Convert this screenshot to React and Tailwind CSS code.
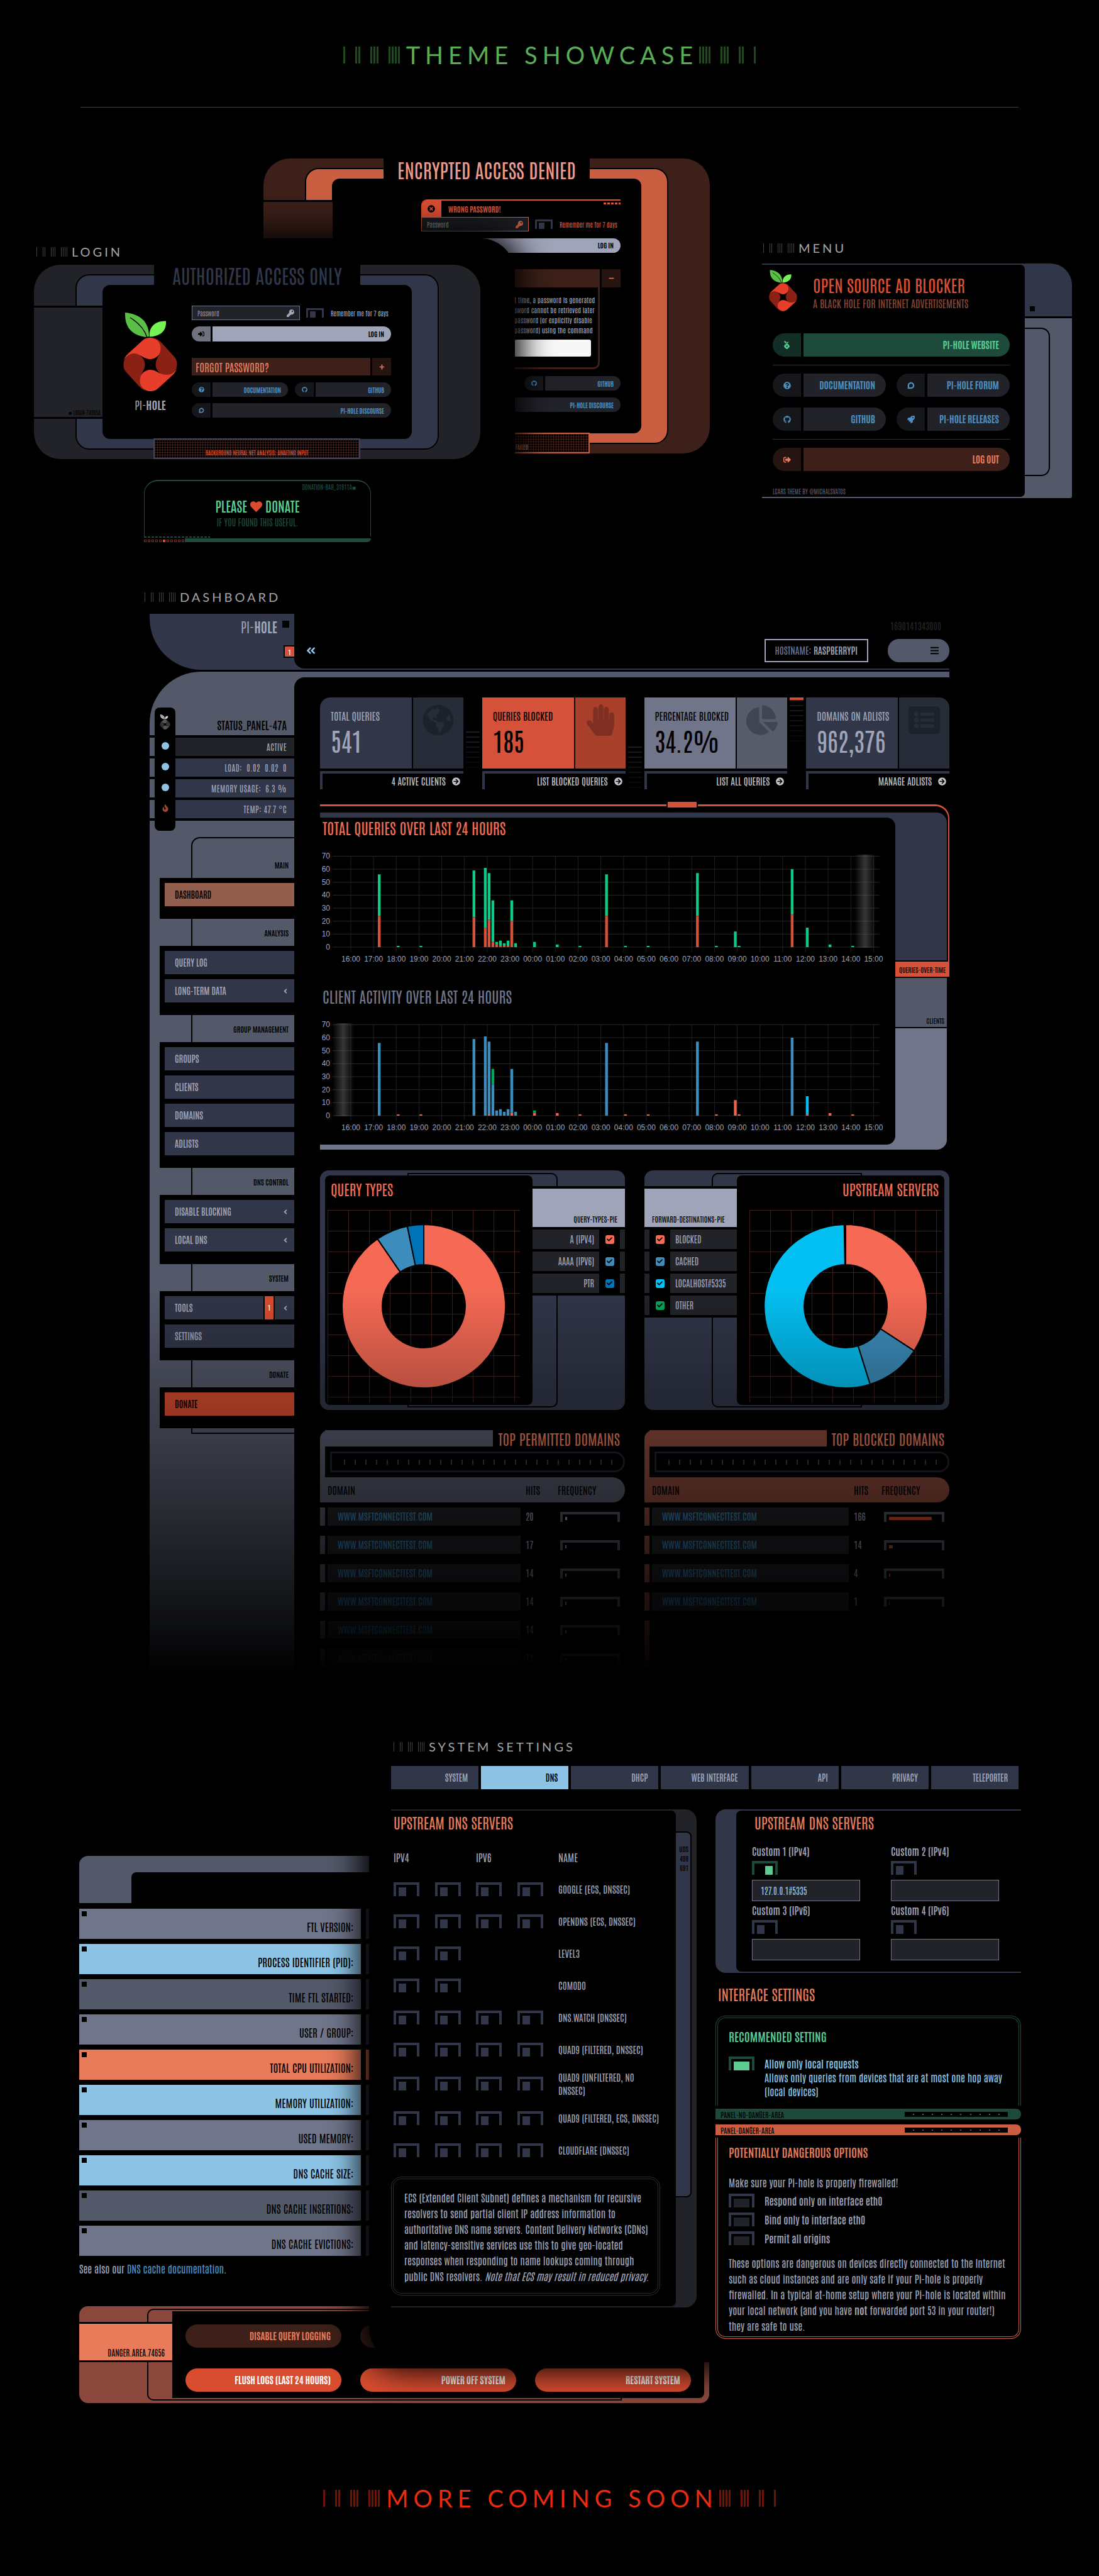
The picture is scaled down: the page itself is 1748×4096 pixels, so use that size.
import {
  FaKey, FaSignInAlt, FaPlus, FaMinus, FaQuestionCircle, FaGithub, FaDiscourse, FaHeart,
  FaTimesCircle, FaRocket, FaSignOutAlt, FaGlobeAmericas, FaHandPaper, FaChartPie, FaListAlt,
  FaArrowCircleRight, FaAngleDoubleLeft, FaBars, FaFire, FaCheck, FaAngleLeft,
} from "react-icons/fa";

/* ---------- shared pieces ---------- */

const PETAL =
  "M0.5 77C2 72 4 69 7 66L30 45C34 41 38 40 43 40C53 40 60.5 48 60.5 57C60.5 66 52 74 43 74C33 74 28 66 17 66C9 66 3 71 0.5 77Z";

function PiLogo({ className, bright = "#e63e2a", dark = "#8b2015", leaf = "#5bbf46", leaf2 = "#73f354" }) {
  return (
    <svg viewBox="0 0 86 125" className={className} aria-hidden="true">
      <path fill={leaf} d="M3 0C24 2 41 12 41 38L36 39C14 36 2 24 3 0Z" />
      <path fill="none" stroke="#000" strokeWidth="1.4" d="M11 8C24 16 34 26 38 40" />
      <path fill={leaf2} d="M68 13.5C52 13 40 22 42 38.5C60 38 69 28 68 13.5Z" />
      <path fill={bright} d={PETAL} />
      <path fill={dark} d={PETAL} transform="rotate(90 43 82.5)" />
      <path fill={bright} d={PETAL} transform="rotate(180 43 82.5)" />
      <path fill={dark} d={PETAL} transform="rotate(270 43 82.5)" />
    </svg>
  );
}

function Bars({ groups, bar, inner, outer }) {
  return (
    <span aria-hidden="true" className={"flex h-full " + outer}>
      {groups.map((n) => (
        <span key={n} className={"flex h-full " + inner}>
          {Array.from({ length: n }, (_, i) => (
            <i key={i} className={"block h-full " + bar} />
          ))}
        </span>
      ))}
    </span>
  );
}

function Banner({ children, tone, bar }) {
  return (
    <div className="flex h-[27px] items-center justify-center gap-[10px]">
      <Bars groups={[1, 2, 3, 4]} bar={"w-[3px] " + bar} inner="gap-[2px]" outer="gap-[16px]" />
      <h1 className={"mr-[-8px] text-[38px] leading-[27px] tracking-[8px] [font-family:Lato,sans-serif] " + tone}>{children}</h1>
      <Bars groups={[4, 3, 2, 1]} bar={"w-[3px] " + bar} inner="gap-[2px]" outer="gap-[16px]" />
    </div>
  );
}

function Label({ children, className = "" }) {
  return (
    <div className={"flex h-[20px] items-center gap-[7px] " + className}>
      <span className="h-[15px]">
        <Bars groups={[1, 2, 3, 4]} bar="w-px bg-[#444]" inner="gap-[2px]" outer="gap-[9px]" />
      </span>
      <h2 className="text-[20px] leading-[20px] tracking-[4px] text-[#a5a5a5] [font-family:Lato,sans-serif]">{children}</h2>
    </div>
  );
}

function Pill({ icon: Icon, children, seg, main, text, small, className = "" }) {
  return (
    <a href="#" className={"flex " + (small ? "h-[23px] gap-[3px] " : "h-[37px] gap-[4px] ") + text + " " + className}>
      <span className={"flex items-center justify-center " + seg + (small ? " w-[30px] rounded-l-[12px] text-[9px]" : " w-[45px] rounded-l-[19px] text-[12px]")}>
        <Icon />
      </span>
      <span className={"flex flex-1 items-center justify-end font-bold " + main + (small ? " rounded-r-[12px] pr-[11px] text-[10px]" : " rounded-r-[19px] pr-[17px] text-[15px]")}>
        {children}
      </span>
    </a>
  );
}

const KNOB = "appearance-none shrink-0 bg-no-repeat ";
const TOGGLES = {
  small: "h-[15px] w-[28px] border-x-[3px] border-t-[3px] border-[#313648] bg-[linear-gradient(#313648,#313648)] bg-[length:9px_10px] bg-[position:3px_100%]",
  off: "h-[22px] w-[41px] border-x-[4px] border-t-[4px] border-[#313648] bg-[linear-gradient(#313648,#313648)] bg-[length:12px_14px] bg-[position:4px_100%]",
  on: "h-[22px] w-[41px] border-x-[4px] border-t-[4px] border-[#1e4a3c] bg-[linear-gradient(#5ccc93,#5ccc93)] bg-[length:12px_14px] bg-[position:17px_100%]",
  wideOn: "h-[22px] w-[41px] border-x-[4px] border-t-[4px] border-[#1e4a3c] bg-[linear-gradient(#5ccc93,#5ccc93)] bg-[length:25px_14px] bg-[position:4px_100%]",
  wideOff: "h-[22px] w-[41px] border-x-[4px] border-t-[4px] border-[#313648] bg-[linear-gradient(#222329,#222329)] bg-[length:25px_14px] bg-[position:4px_100%]",
};
function Toggle({ kind = "off", type = "checkbox", className = "", ...rest }) {
  return <input type={type} className={KNOB + TOGGLES[kind] + " " + className} {...rest} />;
}

const BLUE_SEG = "bg-[#16171b]";
const BLUE_MAIN = "bg-[#222329]";
const BLUE_TEXT = "text-[#4e8fc0]";
const HATCH =
  "bg-[repeating-linear-gradient(90deg,#3c2019_0_1px,transparent_1px_4px),repeating-linear-gradient(0deg,#3c2019_0_1px,transparent_1px_4px)]";

/* ---------- login screens ---------- */

function DeniedScreen() {
  return (
    <div className="relative h-[469px] rounded-[42px] bg-[#3c2019] px-[66px] py-[15px]">
      <div className="h-full rounded-[22px] border-2 border-black bg-[#c95e41] px-[41px] py-[15px]">
        <div className="h-full rounded-[12px] bg-black pl-[142px] pr-[33px] pt-[33px]">
          <div className="relative flex h-[28px] rounded-tl-[9px] border-t-2 border-[#d84d30]">
            <span className="flex w-[32px] items-center justify-center rounded-tl-[8px] bg-[#d84d30] text-[12px] text-black"><FaTimesCircle /></span>
            <span className="flex items-center pl-[11px] text-[12px] font-bold text-[#d8573c]">WRONG PASSWORD!</span>
            <span className="absolute right-0 top-[3px] h-[3px] w-[27px] bg-[repeating-linear-gradient(90deg,#d8573c_0_4px,transparent_4px_6px)]" />
          </div>
          <div className="flex items-center">
            <label className="flex h-[23px] w-[171px] shrink-0 items-center border border-[#c95e41] bg-[#1b1c21] px-[8px]">
              <input placeholder="Password" aria-label="Password" className="w-full bg-transparent text-[10px] leading-none placeholder:text-[#85868c]" />
              <FaKey className="shrink-0 text-[12px] text-[#b0593c]" />
            </label>
            <label className="ml-[10px] flex items-center gap-[11px] whitespace-nowrap text-[10px] font-medium text-[#d8573c]">
              <Toggle kind="small" /> Remember me for 7 days
            </label>
          </div>
          <button className="mt-[11px] flex h-[23px] w-full items-center justify-end rounded-[12px] bg-[#9fa4b8] pr-[11px] text-[11px] font-bold text-black">LOG IN</button>
          <div className="mt-[26px] flex gap-[3px]">
            <div className="h-[159px] w-[284px] rounded-b-[10px] border-x-[3px] border-b-[3px] border-t-[29px] border-[#3c2019] pl-[145px] pt-[12px]">
              <p className="text-[11px] leading-[16px] whitespace-nowrap text-[#9fa4b8]">
                t time, a password is generated<br />sword cannot be retrieved later<br />password (or explicitly disable<br />password) using the command
              </p>
              <div className="mt-[7px] mr-[11px] h-[27px] rounded-[3px] bg-[#f7f7f8]" />
            </div>
            <button aria-label="Collapse" className="flex h-[29px] flex-1 items-center justify-center bg-[#25140f] text-[9px] text-[#e77b5a]"><FaMinus /></button>
          </div>
          <Pill small icon={FaGithub} seg={BLUE_SEG} main={BLUE_MAIN} text={BLUE_TEXT} className="mt-[11px] ml-auto w-[153px]">GITHUB</Pill>
          <Pill small icon={FaDiscourse} seg={BLUE_SEG} main={BLUE_MAIN} text={BLUE_TEXT} className="mt-[11px]">PI-HOLE DISCOURSE</Pill>
        </div>
      </div>
      <div className="absolute left-0 top-[66px] h-[330px] w-[110px] border-t-[3px] border-black bg-[#3c2019]" />
      <h3 className="absolute left-[191px] top-0 flex h-[34px] w-[328px] items-center justify-center bg-black text-[31px] leading-none font-medium whitespace-nowrap text-[#ea9a8c]">
        ENCRYPTED ACCESS DENIED
      </h3>
      <div className={"absolute bottom-0 left-[191px] flex h-[33px] w-[328px] items-end border-2 border-[#c95e41] bg-black pb-[4px] pl-[208px] text-[9px] leading-none text-[#b97b66] " + HATCH}>FAILED</div>
    </div>
  );
}

function LoginScreen() {
  return (
    <div className="relative rounded-[42px] bg-[#222329] px-[66px] py-[15px]">
      <div className="rounded-[22px] border-2 border-black bg-[#313648] px-[41px] py-[15px]">
        <div className="flex h-[245px] rounded-[12px] bg-black pl-[33px] pr-[33px]">
          <div className="w-[86px] pt-[44px]">
            <PiLogo className="h-[125px] w-[86px]" />
            <p className="mt-[9px] text-center text-[18px] leading-[24px] text-[#9fa4b8]"><span className="font-light">PI-</span><b>HOLE</b></p>
          </div>
          <form className="ml-[23px] flex-1 pt-[33px]" onSubmit={(e) => e.preventDefault()}>
            <div className="flex items-center">
              <label className="flex h-[23px] w-[172px] shrink-0 items-center border border-[#70758a] bg-[#222329] px-[8px]">
                <input placeholder="Password" aria-label="Password" className="w-full bg-transparent text-[10px] leading-none placeholder:text-[#8a8b90]" />
                <FaKey className="shrink-0 text-[12px] text-[#9fa4b8]" />
              </label>
              <label className="ml-[10px] flex items-center gap-[11px] whitespace-nowrap text-[10px] font-medium text-[#9fa4b8]">
                <Toggle kind="small" /> Remember me for 7 days
              </label>
            </div>
            <button className="mt-[10px] flex h-[24px] w-full gap-[3px] text-[11px] font-bold text-black">
              <span className="flex h-full w-[30px] items-center justify-center rounded-l-[12px] bg-[#70727f] text-[10px]"><FaSignInAlt /></span>
              <span className="flex h-full flex-1 items-center justify-end rounded-r-[12px] bg-[#9fa4b8] pr-[11px]">LOG IN</span>
            </button>
            <div className="mt-[26px] flex h-[28px] gap-[3px] text-[#e77b5a]">
              <h4 className="flex flex-1 items-center bg-[#3c2019] pl-[6px] text-[17px] leading-none font-medium">FORGOT PASSWORD?</h4>
              <button type="button" aria-label="Expand" className="flex w-[30px] items-center justify-center bg-[#25140f] text-[9px]"><FaPlus /></button>
            </div>
            <div className="mt-[11px] grid grid-cols-2 gap-x-[11px] gap-y-[10px]">
              <Pill small icon={FaQuestionCircle} seg={BLUE_SEG} main={BLUE_MAIN} text={BLUE_TEXT}>DOCUMENTATION</Pill>
              <Pill small icon={FaGithub} seg={BLUE_SEG} main={BLUE_MAIN} text={BLUE_TEXT}>GITHUB</Pill>
              <Pill small icon={FaDiscourse} seg={BLUE_SEG} main={BLUE_MAIN} text={BLUE_TEXT} className="col-span-2">PI-HOLE DISCOURSE</Pill>
            </div>
          </form>
        </div>
      </div>
      <div className="absolute left-0 top-[65px] flex h-[180px] w-[109px] items-end justify-end border-y-[3px] border-black bg-[#222329] pb-[3px] pr-[3px] text-[9px] leading-none text-black">
        ■ LOGIN-74205A
      </div>
      <h3 className="absolute left-[191px] top-0 flex h-[33px] w-[328px] items-center justify-center bg-black text-[31px] leading-none whitespace-nowrap text-[#313648]">
        AUTHORIZED ACCESS ONLY
      </h3>
      <div className={"absolute bottom-0 left-[190px] flex h-[33px] w-[329px] items-end justify-center border-2 border-[#3d4358] bg-black pb-[4px] text-[9px] leading-none font-medium text-[#d8573c] " + HATCH}>
        BACKGROUND NEURAL NET ANALYSIS: AWAITING INPUT
      </div>
    </div>
  );
}

function DonateBar() {
  return (
    <div className="w-[361px]">
      <div className="flex h-[90px] flex-col items-center rounded-t-[22px] border-x border-t-2 border-[#1f4a3c] text-[#1f4a3c]">
        <p className="mr-[23px] mt-[3px] self-end text-[10px] leading-[12px]">DONATION-BAR_31911A■</p>
        <p className="mt-[10px] flex items-center gap-[5px] text-[21px] leading-[30px] font-semibold text-[#5ccc93]">
          PLEASE <FaHeart className="text-[19px] text-[#d84d30]" /> DONATE
        </p>
        <p className="text-[14px] leading-[20px]">IF YOU FOUND THIS USEFUL.</p>
      </div>
      <div className="flex items-end">
        <div className="w-[65px]">
          <div className="h-[2px] w-[105px] bg-[repeating-linear-gradient(90deg,#1f4a3c_0_4px,transparent_4px_6px)]" />
          <div className="mt-[3px] flex gap-[2px]">
            {Array.from({ length: 11 }, (_, i) => (
              <i key={i} className={"block size-[4px] border " + (i === 5 ? "border-[#d84d30] bg-[#d84d30]" : "border-[#7a2d1e]")} />
            ))}
          </div>
        </div>
        <div className="h-[6px] flex-1 rounded-br-[22px] bg-[#1f4a3c]" />
      </div>
    </div>
  );
}

/* ---------- slide-out menu ---------- */

function MenuScreen() {
  const blue = { seg: BLUE_SEG, main: BLUE_MAIN, text: BLUE_TEXT };
  return (
    <div className="flex h-[373px] rounded-tr-[34px] rounded-br-[3px] bg-[linear-gradient(#313648_0_84px,#000_84px_87px,#54596a_87px)] py-[2px]">
      <nav className="w-[418px] rounded-r-[7px] bg-black pl-[17px] pr-[24px]">
        <div className="flex h-[109px]">
          <PiLogo className="-ml-[6px] mt-[8px] h-[66px] w-[45px]" />
          <div className="ml-[25px] pt-[15px]">
            <h3 className="text-[27px] leading-[34px] font-medium text-[#dd4d30]">OPEN SOURCE AD BLOCKER</h3>
            <p className="mt-[2px] text-[16px] leading-[20px] text-[#8a4638]">A BLACK HOLE FOR INTERNET ADVERTISEMENTS</p>
          </div>
        </div>
        <Pill icon={(p) => <PiLogo {...p} className="h-[13px] w-[9px]" bright="#5ccc93" dark="#5ccc93" leaf="#5ccc93" leaf2="#5ccc93" />} seg="bg-[#122e26]" main="bg-[#1e4a3c]" text="text-[#5ccc93]">PI-HOLE WEBSITE</Pill>
        <hr className="my-[13px] border-[#2c2c31]" />
        <div className="grid grid-cols-2 gap-x-[17px] gap-y-[17px]">
          <Pill icon={FaQuestionCircle} {...blue}>DOCUMENTATION</Pill>
          <Pill icon={FaDiscourse} {...blue}>PI-HOLE FORUM</Pill>
          <Pill icon={FaGithub} {...blue}>GITHUB</Pill>
          <Pill icon={FaRocket} {...blue}>PI-HOLE RELEASES</Pill>
        </div>
        <hr className="my-[13px] border-[#2c2c31]" />
        <Pill icon={FaSignOutAlt} seg="bg-[#25140f]" main="bg-[#3c2019]" text="text-[#e77b5a]">LOG OUT</Pill>
        <p className="mt-[26px] text-[10px] leading-[12px] text-[#54596a]">LCARS THEME BY @MICHALSVATOS</p>
      </nav>
      <div className="flex flex-1 flex-col">
        <i className="ml-[8px] mt-[66px] block size-[8px] bg-black" />
        <div className="mt-[26px] h-[236px] w-[40px] rounded-r-[14px] border-y-2 border-r-2 border-black" />
      </div>
    </div>
  );
}

/* ---------- dashboard ---------- */

const NAV = [
  ["MAIN", [["DASHBOARD", "active"]]],
  ["ANALYSIS", [["QUERY LOG"], ["LONG-TERM DATA", "tree"]]],
  ["GROUP MANAGEMENT", [["GROUPS"], ["CLIENTS"], ["DOMAINS"], ["ADLISTS"]]],
  ["DNS CONTROL", [["DISABLE BLOCKING", "tree"], ["LOCAL DNS", "tree"]]],
  ["SYSTEM", [["TOOLS", "badge"], ["SETTINGS"]]],
  ["DONATE", [["DONATE", "donate"]]],
];

function NavItem({ name, kind }) {
  const tone =
    kind === "active" ? "bg-[#925e4e] text-black" : kind === "donate" ? "bg-[#d84d30] text-black" : "bg-[#313648] text-[#9fa4b8]";
  return (
    <a href="#" className={"flex h-[37px] items-center pl-[16px] text-[14px] font-semibold " + tone}>
      <span className="flex-1">{name}</span>
      {kind === "badge" && (
        <span className="flex h-full w-[18px] items-center justify-center border-x-2 border-black bg-[#d84d30] text-[11px] text-white">1</span>
      )}
      {(kind === "tree" || kind === "badge") && <FaAngleLeft className="mr-[8px] ml-[11px] text-[12px]" />}
    </a>
  );
}

const STATUS = ["ACTIVE", "LOAD:  0.02  0.02  0", "MEMORY USAGE:  6.3 %", "TEMP: 47.7 °C"];

function Sidebar() {
  return (
    <aside className="relative w-[230px] rounded-tl-[82px] bg-[#54596a]">
      <div className="flex h-[101px] items-end justify-end pb-[6px] pr-[12px] text-[17px] leading-[22px] font-semibold text-black">STATUS_PANEL-47A</div>
      <div className="border-b-4 border-black">
        {STATUS.map((s, i) => (
          <div key={s} className="flex h-[33px] border-t-4 border-black pl-[8px]">
            <div className={"ml-[33px] flex flex-1 items-center justify-end pr-[12px] text-[13px] tracking-[0.5px] whitespace-pre text-[#9fa4b8] " + (i ? "bg-[#313648]" : "bg-[#222329]")}>{s}</div>
          </div>
        ))}
      </div>
      <div className="absolute left-[8px] top-[57px] flex h-[196px] w-[33px] flex-col items-center rounded-[8px] bg-black pt-[11px] text-[#8dc4e6]">
        <PiLogo className="h-[24px] w-[17px]" bright="#555559" dark="#333338" leaf="#b5b5b5" leaf2="#d5d5d5" />
        <i className="mt-[20px] block size-[12px] rounded-full bg-[#8dc4e6]" />
        <i className="mt-[21px] block size-[12px] rounded-full bg-[#8dc4e6]" />
        <i className="mt-[21px] block size-[12px] rounded-full bg-[#8dc4e6]" />
        <FaFire className="mt-[21px] text-[12px] text-[#a04834]" />
      </div>
      <nav className="relative pt-[48px]">
        <i className="absolute bottom-[-9px] left-[66px] right-0 top-[26px] rounded-tl-[14px] border-y-2 border-l-2 border-black" />
        {NAV.map(([title, items]) => (
          <section key={title} className="relative">
            <h3 className="flex h-[43px] items-center justify-end pr-[9px] text-[12px] font-semibold text-black">{title}</h3>
            <div className="ml-[16px] flex flex-col gap-[8px] bg-black pb-[20px] pl-[8px] pt-[8px]">
              {items.map(([name, kind]) => <NavItem key={name} name={name} kind={kind} />)}
            </div>
          </section>
        ))}
      </nav>
    </aside>
  );
}

const TICKS = "bg-[repeating-linear-gradient(#1c1c22_0_2px,transparent_2px_8px)] [mask-image:linear-gradient(#000,#0003)]";
const CARDS = [
  { title: "TOTAL QUERIES", value: "541", link: "4 ACTIVE CLIENTS", icon: FaGlobeAmericas, a: "bg-[#313648] text-[#9fa4b8] rounded-tl-[16px]", b: "bg-[#262c38] text-[#1d212b]", ticks: "top-[54px] h-[60px]" },
  { title: "QUERIES BLOCKED", value: "185", link: "LIST BLOCKED QUERIES", icon: FaHandPaper, a: "bg-[#d55139] text-black", b: "bg-[#a9402c] text-[#7f2f21]", ticks: "top-[78px] h-[68px]" },
  { title: "PERCENTAGE BLOCKED", value: "34.2%", link: "LIST ALL QUERIES", icon: FaChartPie, a: "bg-[#70758a] text-black", b: "bg-[#575c6b] text-[#404553]", ticks: "top-0 h-[72px] border-t-4 border-[#d55139]" },
  { title: "DOMAINS ON ADLISTS", value: "962,376", link: "MANAGE ADLISTS", icon: FaListAlt, a: "bg-[#313648] text-[#9fa4b8]", b: "bg-[#262c38] text-[#1d212b] rounded-tr-[16px]" },
];

function StatCard({ title, value, link, icon: Icon, a, b, ticks }) {
  return (
    <div className="relative">
      <div className="flex h-[113px] gap-[2px]">
        <div className={"flex-1 pl-[17px] pt-[19px] whitespace-nowrap " + a}>
          <p className="text-[16px] leading-[20px]">{title}</p>
          <p className="mt-[5px] text-[40px] leading-[48px] font-medium">{value}</p>
        </div>
        <div className={"flex w-[80px] justify-center pt-[11px] text-[50px] " + b}><Icon /></div>
      </div>
      <a href="#" className="mt-[4px] flex h-[29px] items-center justify-end gap-[10px] border-l-4 border-t-4 border-[#313648] pr-[5px] text-[15px] text-[#c3c3c9]">
        {link} <FaArrowCircleRight className="text-[13px]" />
      </a>
      {ticks && <i className={"absolute right-[-26px] w-[22px] " + TICKS + " " + ticks} />}
    </div>
  );
}

const HOURS = Array.from({ length: 24 }, (_, i) => String((16 + i) % 24).padStart(2, "0") + ":00");
const R1 = "#d55139", G1 = "#0fca82", B2 = "#3c8dbc", R2 = "#f0624c", G2 = "#00a65a", C2 = "#03bdf3";
/* slot (10 minutes each), then value and colour pairs stacked from the bottom */
const QUERIES = [
  [7, 24, 56], [12, 0, 1], [18, 0, 1], [32, 23, 59], [35, 15, 61], [36, 21, 57], [37, 4, 36], [38, 2, 4], [39, 1, 5], [40, 1, 3],
  [41, 1, 5], [42, 20, 36], [43, 0, 3], [48, 0, 4], [54, 0, 2], [60, 0, 1], [67, 24, 56], [72, 0, 1], [78, 0, 1], [91, 24, 57],
  [96, 0, 1], [101, 0, 12], [102, 0, 1], [116, 25, 60], [120, 0, 15], [126, 0, 2], [132, 0, 1],
].map(([s, lo, hi]) => [s, lo, R1, hi, G1]);
const CLIENTS = [
  [7, 0, R2, 56, B2], [12, 1, R2, 1, R2], [18, 1, R2, 1, R2], [32, 0, R2, 59, B2], [35, 0, R2, 61, B2], [36, 1, R2, 57, B2],
  [37, 24, B2, 36, G2], [38, 0, R2, 4, B2], [39, 0, R2, 5, B2], [40, 0, R2, 3, B2], [41, 0, R2, 5, B2], [42, 2, R2, 36, B2],
  [43, 0, R2, 3, B2], [48, 2, R2, 4, G2], [54, 2, R2, 2, R2], [60, 1, R2, 1, R2], [67, 0, R2, 56, B2], [72, 1, R2, 1, R2],
  [78, 1, R2, 1, R2], [91, 0, R2, 57, B2], [96, 1, R2, 1, R2], [101, 12, R2, 12, R2], [102, 1, R2, 1, R2], [116, 0, R2, 60, B2],
  [120, 1, R2, 15, C2], [126, 2, R2, 2, R2], [132, 1, R2, 1, R2],
];

function BarChart({ data, glow, id }) {
  const x0 = 49, step = 36.15, base = 158, unit = 2.066;
  return (
    <svg viewBox="0 0 915 184" className="w-full" role="img" aria-label={id}>
      <defs>
        <linearGradient id={id + "-glow"} x1="0" x2="1">
          <stop offset="0" stopColor="#777" stopOpacity="0" />
          <stop offset="0.5" stopColor="#777" stopOpacity="0.45" />
          <stop offset="1" stopColor="#777" stopOpacity="0" />
        </linearGradient>
      </defs>
      {[0, 10, 20, 30, 40, 50, 60, 70].map((v) => (
        <g key={v}>
          <line x1="20" x2="890" y1={base - v * unit} y2={base - v * unit} stroke="#26262c" strokeWidth="1" />
          <text x="16" y={base + 4 - v * unit} textAnchor="end" fontSize="12" fill="#9fa4b8">{v}</text>
        </g>
      ))}
      {HOURS.map((h, i) => (
        <g key={h}>
          <line x1={x0 + i * step} x2={x0 + i * step} y1={base - 144.6} y2={base + 8} stroke="#1f1f24" strokeWidth="1" />
          <text x={x0 + i * step} y={base + 23} textAnchor="middle" fontSize="12" fill="#9fa4b8">{h}</text>
        </g>
      ))}
      {data.map(([s, lo, c1, hi, c2]) => (
        <g key={s}>
          <rect x={x0 + (s + 0.5) * 6.025 - 2.2} y={base - hi * unit} width="4.4" height={(hi - lo) * unit} fill={c2} />
          <rect x={x0 + (s + 0.5) * 6.025 - 2.2} y={base - lo * unit} width="4.4" height={lo * unit} fill={c1} />
        </g>
      ))}
      <rect x={glow} y={base - 147} width="34" height="148" fill={`url(#${id}-glow)`} />
    </svg>
  );
}

function TimePanel() {
  return (
    <div className="relative mt-[24px] pt-[13px]">
      <i className="absolute right-0 top-0 h-[254px] w-full rounded-tr-[22px] border-r-2 border-t-[3px] border-[#d55139]" />
      <i className="absolute right-[400px] top-[-5px] h-[12px] w-[50px] border-x-2 border-b-2 border-t border-black bg-[#d55139]" />
      <div className="relative mr-[4px] grid grid-cols-[1fr_82px]">
        <div>
          <div className="bg-[#313648] pt-[8px]">
            <div className="h-[260px] rounded-tr-[14px] bg-black pt-[2px]">
              <h3 className="pl-[4px] text-[24px] leading-[28px] font-medium text-[#f06c50]">TOTAL QUERIES OVER LAST 24 HOURS</h3>
              <div className="mt-[18px] [font-family:'Liberation_Sans',sans-serif]"><BarChart id="queries" data={QUERIES} glow={850} /></div>
            </div>
          </div>
          <div className="bg-[#70758a] pb-[8px]">
            <div className="h-[260px] rounded-br-[14px] bg-black pt-[10px]">
              <h3 className="pl-[4px] text-[24px] leading-[28px] text-[#70758a]">CLIENT ACTIVITY OVER LAST 24 HOURS</h3>
              <div className="mt-[18px] [font-family:'Liberation_Sans',sans-serif]"><BarChart id="clients" data={CLIENTS} glow={20} /></div>
            </div>
          </div>
        </div>
        <div className="flex flex-col gap-[2px] text-[11px] leading-none text-black">
          <div className="h-[235px] rounded-tr-[16px] bg-[#313648]" />
          <div className="mr-[-4px] flex h-[24px] items-center justify-end bg-[#d55139] pr-[6px] font-medium">QUERIES-OVER-TIME</div>
          <div className="flex h-[78px] items-end justify-end bg-[#54596a] pb-[5px] pr-[4px]">CLIENTS</div>
          <div className="flex-1 rounded-br-[16px] bg-[#70758a]" />
        </div>
      </div>
    </div>
  );
}

function Donut({ slices, id }) {
  const c = 153, R = 130, r = 66;
  const pt = (a, rad) => {
    const t = ((a - 90) * Math.PI) / 180;
    return (c + rad * Math.cos(t)).toFixed(1) + " " + (c + rad * Math.sin(t)).toFixed(1);
  };
  return (
    <svg viewBox="0 0 306 306" className="h-[306px] w-[306px]" role="img" aria-label={id}>
      <defs>
        <pattern id={id + "-grid"} width="33" height="33" patternUnits="userSpaceOnUse">
          <path d="M0.5 0V33M0 0.5H33" stroke="#3c2019" fill="none" />
        </pattern>
      </defs>
      <rect width="306" height="306" fill={`url(#${id}-grid)`} />
      {slices.map(([a, b, fill]) => {
        const big = b - a > 180 ? 1 : 0;
        return (
          <path key={a} fill={fill} stroke="#000" strokeWidth="2"
            d={`M${pt(a, R)}A${R} ${R} 0 ${big} 1 ${pt(b, R)}L${pt(b, r)}A${r} ${r} 0 ${big} 0 ${pt(a, r)}Z`} />
        );
      })}
    </svg>
  );
}

function PiePanel({ title, tag, rows, slices, flip }) {
  return (
    <div className={"relative flex h-[381px] overflow-hidden rounded-[14px] bg-[#313648] py-[8px] " + (flip ? "flex-row-reverse pr-[8px]" : "pl-[8px]")}>
      <i className={"absolute inset-y-[4px] w-[239px] border-2 border-black " + (flip ? "right-[139px] rounded-l-[10px]" : "left-[139px] rounded-r-[10px]")} />
      <div className="relative w-[330px] rounded-[8px] bg-black">
        <h3 className={"px-[9px] pt-[5px] text-[23px] leading-[32px] font-medium text-[#f06c50] " + (flip ? "text-right" : "")}>{title}</h3>
        <div className={"mt-[18px] " + (flip ? "ml-[20px]" : "ml-[4px]")}><Donut id={tag.toLowerCase()} slices={slices} /></div>
      </div>
      <div className="relative mt-[17px] flex flex-1 flex-col gap-[4px] self-start bg-black py-[4px]">
        <p className={"flex h-[61px] items-end bg-[#9fa4b8] px-[12px] pb-[5px] text-[12px] leading-[16px] whitespace-nowrap text-black " + (flip ? "" : "justify-end")}>{tag}</p>
        {rows.map(([name, color]) => (
          <label key={name} className={"flex h-[31px] " + (flip ? "flex-row-reverse" : "")}>
            <span className={"flex flex-1 items-center bg-[#222329] px-[8px] text-[14px] text-[#9fa4b8] " + (flip ? "" : "justify-end")}>{name}</span>
            <span className="flex w-[33px] items-center justify-center">
              <span className="grid size-[14px] place-items-center rounded-[3px]" style={{ background: color }}>
                <input type="checkbox" defaultChecked className="col-start-1 row-start-1 size-[14px] appearance-none" />
                <FaCheck className="col-start-1 row-start-1 text-[9px] text-black" />
              </span>
            </span>
            <span className="w-[8px] bg-[#222329]" />
          </label>
        ))}
      </div>
    </div>
  );
}

function TopTable({ title, rows, red }) {
  const max = 166;
  const fill = red ? "bg-[#89483b]" : "bg-[#54596a]";
  const cols = red ? "grid-cols-[8px_313px_44px_1fr]" : "grid-cols-[8px_307px_51px_1fr]";
  return (
    <div className="flex flex-col">
      <div className={"h-[75px] rounded-tl-[14px] pl-[8px] " + fill}>
        <div className="flex">
          <i className={"h-[26px] flex-1 " + fill} />
          <h3 className="bg-black pl-[8px] pr-[8px] text-[23px] leading-[26px] text-[#e77b5a]">{title}</h3>
        </div>
        <div className="h-[49px] bg-black pl-[8px] pt-[8px]">
          <div className="flex h-[33px] items-center rounded-r-[16px] border-[3px] border-[#1b222d] pl-[19px]">
            <i className="h-[8px] w-[430px] bg-[repeating-linear-gradient(90deg,#373c4a_0_2px,transparent_2px_17px)]" />
          </div>
        </div>
      </div>
      <table className="block w-full">
        <thead className="block">
          <tr className={"grid h-[40px] items-center gap-x-[4px] rounded-r-[20px] text-left text-[16px] text-black " + fill + " " + cols}>
            <th className="col-span-2 pl-[12px] font-normal">DOMAIN</th>
            <th className="pl-[4px] font-normal">HITS</th>
            <th className="font-normal">FREQUENCY</th>
          </tr>
        </thead>
        <tbody className="flex flex-col gap-[16px] pt-[8px]">
          {rows.map((n, i) => (
            <tr key={i} className={"grid h-[29px] items-center gap-x-[4px] " + cols}>
              <td className={"h-full p-0 " + fill} />
              <td className="flex h-full items-center bg-[#222329] pl-[16px] text-[15px]"><a href="#" className="text-[#3c8dbc]">WWW.MSFTCONNECTTEST.COM</a></td>
              <td className="pl-[4px] text-[15px] text-[#9fa4b8]">{n}</td>
              <td className="pl-[4px] pr-[8px]">
                <div className="h-[16px] border-x-[4px] border-t-[4px] border-[#54596a] pl-[4px] pt-[4px]">
                  <div className={"h-[5px] " + (red ? "bg-[#d84d30]" : "bg-[#9fa4b8]")} style={{ width: red ? Math.max(1, (n / max) * 68) : Math.max(1, n / 7) }} />
                </div>
              </td>
            </tr>
          ))}
        </tbody>
      </table>
      {red && <i className={"mt-[16px] w-[8px] flex-1 " + fill} />}
    </div>
  );
}

function Dashboard() {
  return (
    <div className="relative">
      <div className="flex">
        <div className="relative h-[89px] w-[230px] rounded-bl-[82px] bg-[#313648] pr-[8px] pt-[11px]">
          <div className="flex justify-end gap-[8px] text-[21px] leading-[20px] text-[#9fa4b8]">
            <p><span className="font-light">PI-</span><b>HOLE</b></p>
            <i className="block size-[11px] bg-black" />
          </div>
          <span className="absolute right-0 top-[50px] flex h-[20px] w-[17px] items-center justify-center border-y-2 border-l-2 border-black bg-[#d55139] text-[11px] leading-none text-white">1</span>
        </div>
        <div className="flex-1 bg-[#313648]">
          <div className="h-[87px] rounded-bl-[16px] bg-black pl-[18px]">
            <p className="pr-[13px] pt-[9px] text-right text-[15px] leading-[20px] text-[#222228]">1690141343000</p>
            <div className="mt-[11px] flex items-center">
              <button aria-label="Toggle navigation" className="text-[17px] text-[#8dc4e6]"><FaAngleDoubleLeft /></button>
              <p className="ml-auto flex h-[37px] items-center gap-[4px] border-2 border-[#9fa4b8] px-[15px] text-[15px] text-[#70758a]">HOSTNAME: <b className="font-semibold text-[#9fa4b8]">RASPBERRYPI</b></p>
              <button aria-label="Menu" className="ml-[31px] flex h-[37px] w-[98px] items-center justify-end rounded-[18px] bg-[#54596a] pr-[16px] text-[15px] text-black"><FaBars /></button>
            </div>
          </div>
        </div>
      </div>
      <div className="mt-[3px] flex">
        <Sidebar />
        <div className="flex-1 bg-[linear-gradient(#54596a_0_60px,#000_60px)] pt-[9px]">
          <div className="h-full rounded-tl-[16px] bg-black pb-[17px] pl-[41px] pt-[32px]">
            <div className="grid grid-cols-4 gap-[30px]">{CARDS.map((c) => <StatCard key={c.title} {...c} />)}</div>
            <TimePanel />
            <div className="mt-[33px] grid grid-cols-2 gap-[31px]">
              <PiePanel title="QUERY TYPES" tag="QUERY-TYPES-PIE" rows={[["A (IPV4)", "#f66a55"], ["AAAA (IPV6)", "#3c8dbc"], ["PTR", "#0073b7"]]}
                slices={[[0, 325.5, "#f66a55"], [325.5, 348.4, "#3c8dbc"], [348.4, 360, "#0073b7"]]} />
              <PiePanel flip title="UPSTREAM SERVERS" tag="FORWARD-DESTINATIONS-PIE"
                rows={[["BLOCKED", "#f66a55"], ["CACHED", "#3c8dbc"], ["LOCALHOST#5335", "#03c0f3"], ["OTHER", "#00a65a"]]}
                slices={[[0, 123, "#f66a55"], [123, 162.6, "#3c8dbc"], [162.6, 359, "#03c0f3"]]} />
            </div>
            <div className="mt-[32px] grid grid-cols-2 gap-[31px]">
              <TopTable title="TOP PERMITTED DOMAINS" rows={[20, 17, 14, 14, 14, 12]} />
              <TopTable red title="TOP BLOCKED DOMAINS" rows={[166, 14, 4, 1]} />
            </div>
          </div>
        </div>
      </div>
      <i className="pointer-events-none absolute inset-x-0 bottom-0 h-[620px] bg-[linear-gradient(transparent,#00000040_160px,#00000055_239px,#00000078_322px,#0000009c_409px,#000000c4_499px,#000000e0_554px,#000_616px)]" />
    </div>
  );
}

/* ---------- system settings ---------- */

const FTL = [
  ["FTL VERSION:", "bg-[#70758a]"], ["PROCESS IDENTIFIER (PID):", "bg-[#8dc4e6]"], ["TIME FTL STARTED:", "bg-[#54596a]"],
  ["USER / GROUP:", "bg-[#70758a]"], ["TOTAL CPU UTILIZATION:", "bg-[#e77b5a]"], ["MEMORY UTILIZATION:", "bg-[#8dc4e6]"],
  ["USED MEMORY:", "bg-[#70758a]"], ["DNS CACHE SIZE:", "bg-[#8dc4e6]"], ["DNS CACHE INSERTIONS:", "bg-[#54596a]"],
  ["DNS CACHE EVICTIONS:", "bg-[#70758a]"],
];

function SystemScreen() {
  const red = "flex h-[37px] items-center justify-end rounded-[19px] bg-[#d84d30] pr-[17px] text-[15px] font-bold text-white";
  return (
    <div>
      <div className="h-[75px] w-[470px] rounded-tl-[14px] bg-[#54596a] pl-[83px] pt-[26px]">
        <div className="h-full rounded-tl-[8px] bg-black" />
      </div>
      <dl className="mt-[9px] flex flex-col gap-[8px]">
        {FTL.map(([name, bg], i) => (
          <div key={name} className="flex h-[48px] gap-[8px]">
            <dt className={"flex w-[448px] items-start justify-between pl-[4px] pr-[12px] pt-[4px] text-[17px] leading-[24px] text-black " + bg}>
              <i className="block size-[8px] bg-black" />
              <span className="mt-[12px]">{name}</span>
            </dt>
            <dd className={"w-[12px] " + (i === 4 ? "bg-[#e77b5a]" : "bg-[#313648]")} />
          </div>
        ))}
      </dl>
      <p className="mt-[8px] text-[16px] leading-[24px] text-[#9fa4b8]">See also our <a href="#" className="text-[#4e8fc0]">DNS cache documentation</a>.</p>
      <div className="relative mt-[48px] h-[154px] rounded-[14px] bg-[#89483b] py-[8px] pl-[148px] pr-[8px]">
        <i className="absolute inset-y-[4px] left-[108px] w-[755px] rounded-l-[10px] border-2 border-black" />
        <div className="absolute left-0 top-[25px] flex h-[64px] w-[148px] items-end justify-end border-y-[3px] border-black bg-[#e77b5a] pb-[4px] pr-[12px] text-[13px] leading-[16px] text-black">DANGER.AREA.74656</div>
        <div className="relative grid h-full grid-cols-3 gap-x-[30px] gap-y-[23px] rounded-r-[8px] bg-black pl-[21px] pr-[21px] pt-[21px]">
          <button className="flex h-[37px] items-center justify-end rounded-[19px] bg-[#3c2019] pr-[17px] text-[15px] font-bold text-[#e77b5a]">DISABLE QUERY LOGGING</button>
          <span className="col-span-2 h-[37px] w-[248px] rounded-[19px] bg-[#3c2019]" />
          <button className={red}>FLUSH LOGS (LAST 24 HOURS)</button>
          <button className={red}>POWER OFF SYSTEM</button>
          <button className={red}>RESTART SYSTEM</button>
        </div>
      </div>
    </div>
  );
}

const SERVERS = [
  ["GOOGLE (ECS, DNSSEC)", 4], ["OPENDNS (ECS, DNSSEC)", 4], ["LEVEL3", 2], ["COMODO", 2], ["DNS.WATCH (DNSSEC)", 4],
  ["QUAD9 (FILTERED, DNSSEC)", 4], ["QUAD9 (UNFILTERED, NO\nDNSSEC)", 4], ["QUAD9 (FILTERED, ECS, DNSSEC)", 4], ["CLOUDFLARE (DNSSEC)", 4],
];

function Custom({ n, v, value = "" }) {
  return (
    <div className="w-[172px]">
      <label htmlFor={"custom" + n} className="block text-[16px] leading-[24px] font-semibold text-[#9fa4b8]">Custom {n} (IPv{v})</label>
      <Toggle kind={value ? "on" : "off"} className="mt-[4px] block" defaultChecked={!!value} aria-label={"Use custom " + n} />
      <input id={"custom" + n} defaultValue={value} className="mt-[8px] block h-[34px] w-full border border-[#70758a] bg-[#222329] pl-[13px] text-[14px] font-medium text-[#8dc4e6]" />
    </div>
  );
}

function Strip({ children, tone }) {
  return (
    <div className={"flex h-[17px] items-center justify-between rounded-r-[8px] pl-[8px] pr-[21px] text-[12px] leading-none font-medium text-black " + tone}>
      {children}
      <i className="flex h-[8px] w-[164px] items-center justify-evenly bg-black">
        {Array.from({ length: 10 }, (_, i) => <i key={i} className="block size-[2px] bg-[#54596a]" />)}
      </i>
    </div>
  );
}

function SettingsScreen() {
  return (
    <div className="self-start rounded-bl-[55px] bg-black pb-[37px] pl-[35px] shadow-[0_0_50px_14px_#000]">
      <Label className="ml-[4px]">SYSTEM SETTINGS</Label>
      <div role="tablist" className="mr-[4px] mt-[21px] grid grid-cols-7 gap-[4px]">
        {["SYSTEM", "DNS", "DHCP", "WEB INTERFACE", "API", "PRIVACY", "TELEPORTER"].map((t) => (
          <button key={t} role="tab" aria-selected={t === "DNS"} className={"flex h-[37px] items-center justify-end pr-[17px] text-[14px] font-semibold " + (t === "DNS" ? "bg-[#8dc4e6] text-black" : "bg-[#313648] text-[#9fa4b8]")}>{t}</button>
        ))}
      </div>
      <div className="mt-[32px] grid grid-cols-2 items-start gap-[30px]">
        <div className="flex rounded-r-[18px] bg-[#222329] py-[2px]">
          <div className="w-[453px] rounded-r-[8px] bg-black pb-[17px] pr-[25px]">
            <h3 className="pl-[4px] text-[23px] leading-[36px] font-medium text-[#e77b5a]">UPSTREAM DNS SERVERS</h3>
            <table className="ml-[4px] mt-[12px] w-[424px] table-fixed text-left text-[#9fa4b8]">
              <thead>
                <tr className="h-[51px] text-[16px]">
                  <th colSpan={2} className="w-[131px] font-medium">IPV4</th>
                  <th colSpan={2} className="w-[131px] font-medium">IPV6</th>
                  <th className="font-medium">NAME</th>
                </tr>
              </thead>
              <tbody>
                {SERVERS.map(([name, n], i) => (
                  <tr key={name} className={i === 6 ? "h-[58px]" : "h-[51px]"}>
                    {[0, 1, 2, 3].map((k) => (
                      <td key={k}>{k < n && <Toggle aria-label={name + " " + (k + 1)} className="block" />}</td>
                    ))}
                    <td className="text-[15px] leading-[21px] font-medium whitespace-pre">{name}</td>
                  </tr>
                ))}
              </tbody>
            </table>
            <p className="mt-[17px] w-[428px] rounded-[16px] border-4 border-double border-[#2a2b32] pb-[14px] pl-[17px] pr-[10px] pt-[17px] text-[16px] leading-[25px] text-[#9fa4b8]">
              ECS (Extended Client Subnet) defines a mechanism for recursive resolvers to send partial client IP address information to authoritative DNS name servers. Content Delivery Networks (CDNs) and latency-sensitive services use this to give geo-located responses when responding to name lookups coming through public DNS resolvers. <em>Note that ECS may result in reduced privacy.</em>
            </p>
          </div>
          <p className="mt-[33px] h-[582px] w-[25px] rounded-r-[8px] border-y-2 border-r-2 border-black bg-[#313648] pr-[3px] pt-[18px] text-right text-[11px] leading-[15px] text-black">UDS<br />498<br />691</p>
        </div>
        <div>
          <div className="rounded-l-[16px] bg-[#313648] py-[2px] pl-[33px]">
            <div className="h-[256px] rounded-l-[8px] bg-black pl-[25px]">
              <h3 className="pl-[4px] text-[23px] leading-[36px] font-medium text-[#e77b5a]">UPSTREAM DNS SERVERS</h3>
              <div className="mt-[16px] grid grid-cols-[172px_172px] gap-x-[49px] gap-y-[2px]">
                <Custom n={1} v={4} value="127.0.0.1#5335" />
                <Custom n={2} v={4} />
                <Custom n={3} v={6} />
                <Custom n={4} v={6} />
              </div>
            </div>
          </div>
          <h3 className="mt-[15px] pl-[4px] text-[23px] leading-[36px] font-medium text-[#e77b5a]">INTERFACE SETTINGS</h3>
          <div className="mt-[17px] h-[143px] rounded-t-[16px] border-x-4 border-t-4 border-double border-[#1e4a3c] pl-[17px] pt-[16px]">
            <h4 className="text-[19px] leading-[26px] font-semibold text-[#5ccc93]">RECOMMENDED SETTING</h4>
            <label className="mt-[19px] flex gap-[16px] text-[16px] leading-[22px] font-semibold text-[#8dc4e6]">
              <Toggle kind="wideOn" type="radio" name="iface" defaultChecked />
              <span>Allow only local requests<br /><span className="font-medium">Allows only queries from devices that are at most one hop away (local devices)</span></span>
            </label>
          </div>
          <div className="mt-[5px] flex flex-col gap-[8px]">
            <Strip tone="bg-[#1e4a3c]">PANEL-NO-DANGER-AREA</Strip>
            <Strip tone="bg-[#c95e41]">PANEL-DANGER-AREA</Strip>
          </div>
          <div className="mt-[4px] rounded-b-[16px] border-x-4 border-b-4 border-double border-[#c95e41] pb-[4px] pl-[17px] pr-[20px] pt-[10px] text-[16px] text-[#9fa4b8]">
            <h4 className="text-[19px] leading-[26px] font-semibold text-[#e77b5a]">POTENTIALLY DANGEROUS OPTIONS</h4>
            <p className="mt-[23px] leading-[24px] font-medium">Make sure your Pi-hole is properly firewalled!</p>
            {["Respond only on interface eth0", "Bind only to interface eth0", "Permit all origins"].map((t) => (
              <label key={t} className="mt-[4px] flex h-[26px] items-center gap-[16px] font-semibold">
                <Toggle kind="wideOff" type="radio" name="iface" /> {t}
              </label>
            ))}
            <p className="mt-[14px] leading-[25px]">
              These options are dangerous on devices directly connected to the Internet such as cloud instances and are only safe if your Pi-hole is properly firewalled. In a typical at-home setup where your Pi-hole is located within your local network (and you have <b>not</b> forwarded port 53 in your router!) they are safe to use.
            </p>
          </div>
        </div>
      </div>
    </div>
  );
}

export default function App() {
  return (
    <main className="min-h-screen w-full overflow-hidden bg-black [font-family:Antonio,'Roboto_Condensed',sans-serif]">
      <header className="pt-[74px]">
        <Banner tone="text-[#5aad55]" bar="bg-[#1f4a1f]">THEME SHOWCASE</Banner>
        <hr className="mx-[128px] mt-[69px] border-[#3f3f3f]" />
      </header>

      <section className="mx-auto flex max-w-[1748px] items-start justify-between pl-[54px] pr-[43px] pt-[81px]">
        <div className="grid w-[1075px]">
          <div className="col-start-1 row-start-1 w-[710px] justify-self-end"><DeniedScreen /></div>
          <div className="relative col-start-1 row-start-1 mt-[127px] w-[765px] rounded-tr-[55px] bg-black pr-[55px] pt-[11px] shadow-[0_0_50px_10px_#000]">
            <Label className="ml-[4px]">LOGIN</Label>
            <div className="mt-[11px]"><LoginScreen /></div>
            <div className="ml-[175px] mt-[33px]"><DonateBar /></div>
          </div>
        </div>
        <div className="w-[493px] pt-[132px]">
          <Label className="ml-[2px]">MENU</Label>
          <div className="mt-[15px]"><MenuScreen /></div>
        </div>
      </section>

      <section className="mx-auto mt-[77px] max-w-[1272px]">
        <Label className="-ml-[8px]">DASHBOARD</Label>
        <div className="mt-[17px]"><Dashboard /></div>
      </section>

      <section className="mx-auto mt-[99px] grid max-w-[1500px] pl-[2px]">
        <div className="col-start-1 row-start-1 mt-[184px] w-[1002px]"><SystemScreen /></div>
        <div className="relative col-start-1 row-start-1 w-[1037px] self-start justify-self-end"><SettingsScreen /></div>
      </section>

      <footer className="pb-[104px] pt-[138px]">
        <Banner tone="text-[#ea2a10]" bar="bg-[#6a1508]">MORE COMING SOON</Banner>
      </footer>
    </main>
  );
}
